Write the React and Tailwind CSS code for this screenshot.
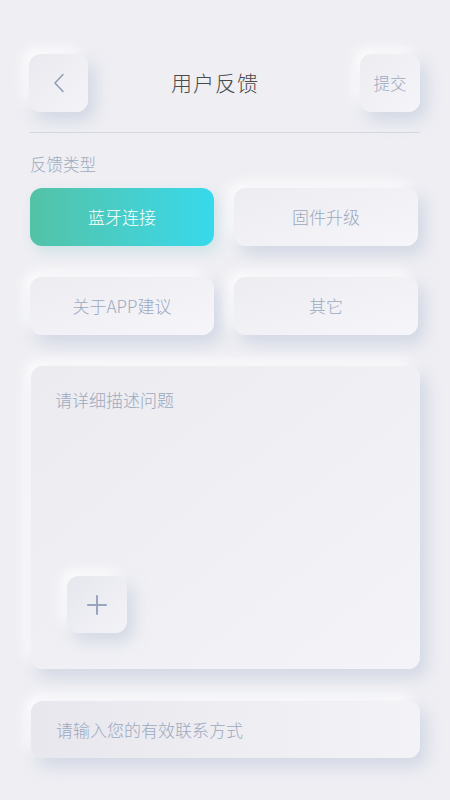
const FONT = { fontFamily: '"Noto Sans CJK SC", "Noto Sans", sans-serif' }

const raised = 'shadow-[6px_8px_16px_rgba(184,194,214,0.55),-6px_-6px_14px_rgba(255,255,255,0.95)]'

function TypeButton({ label, active }) {
  if (active) {
    return (
      <button className="h-[58px] rounded-[12px] bg-gradient-to-r from-[#53c2a6] to-[#37d9ec] text-white text-[17px] shadow-[4px_6px_12px_rgba(120,200,200,0.25)]">
        {label}
      </button>
    )
  }
  return (
    <button className={`h-[58px] rounded-[12px] bg-gradient-to-br from-[#ececf1] to-[#f6f6fa] text-[#9ca9bf] text-[17px] ${raised}`}>
      {label}
    </button>
  )
}

export default function App() {
  return (
    <div style={FONT} className="w-[450px] h-[800px] bg-[#eeeef3] overflow-hidden font-light">
      <div className="px-[30px] pt-[54px]">
        {/* Header */}
        <div className="flex items-center">
          <button className={`-ml-[1px] w-[59px] h-[58px] rounded-[12px] bg-gradient-to-br from-[#e9e9ef] to-[#f4f4f8] flex items-center justify-center ${raised}`}>
            <svg width="12" height="20" viewBox="0 0 12 20" fill="none">
              <path d="M10 1.5 L2 10 L10 18.5" stroke="#8d9bb4" strokeWidth="1.5" strokeLinecap="round" strokeLinejoin="round" />
            </svg>
          </button>
          <h1 className="ml-[83px] text-[21px] text-[#4a4a4a] tracking-[1px]">用户反馈</h1>
          <button className={`ml-auto w-[60px] h-[58px] rounded-[12px] bg-gradient-to-br from-[#ececf1] to-[#f5f5f9] text-[16.5px] text-[#9ca9bf] ${raised}`}>
            提交
          </button>
        </div>

        <div className="mt-[20px] h-[1px] bg-[#d3d8e1]" />

        <div className="mt-[21px] text-[16.5px] leading-[21px] text-[#a0aabd]">反馈类型</div>

        <div className="mt-[13px] grid grid-cols-2 gap-x-[20px] gap-y-[31px] mr-[2px]">
          <TypeButton label="蓝牙连接" active />
          <TypeButton label="固件升级" />
          <TypeButton label="关于APP建议" />
          <TypeButton label="其它" />
        </div>

        {/* Description */}
        <div className={`mt-[31px] ml-[1px] h-[303px] rounded-[12px] bg-gradient-to-br from-[#ebebf0] to-[#f4f4f8] flex flex-col px-[24px] pt-[22px] pb-[36px] ${raised}`}>
          <div className="text-[17px] leading-[24px] text-[#9ca9bf]">请详细描述问题</div>
          <button className={`mt-auto ml-[12px] w-[60px] h-[57px] rounded-[12px] bg-gradient-to-br from-[#e6e7ee] to-[#f3f3f7] flex items-center justify-center ${raised}`}>
            <svg width="22" height="22" viewBox="0 0 22 22" fill="none">
              <path d="M11 2 V20 M2 11 H20" stroke="#98a5bc" strokeWidth="2" strokeLinecap="round" />
            </svg>
          </button>
        </div>

        {/* Contact */}
        <div className={`mt-[32px] ml-[1px] h-[57px] rounded-[12px] bg-gradient-to-r from-[#e7e7ed] to-[#f3f3f7] flex items-center px-[25px] text-[17px] text-[#9ca9bf] ${raised}`}>
          请输入您的有效联系方式
        </div>
      </div>
    </div>
  )
}
